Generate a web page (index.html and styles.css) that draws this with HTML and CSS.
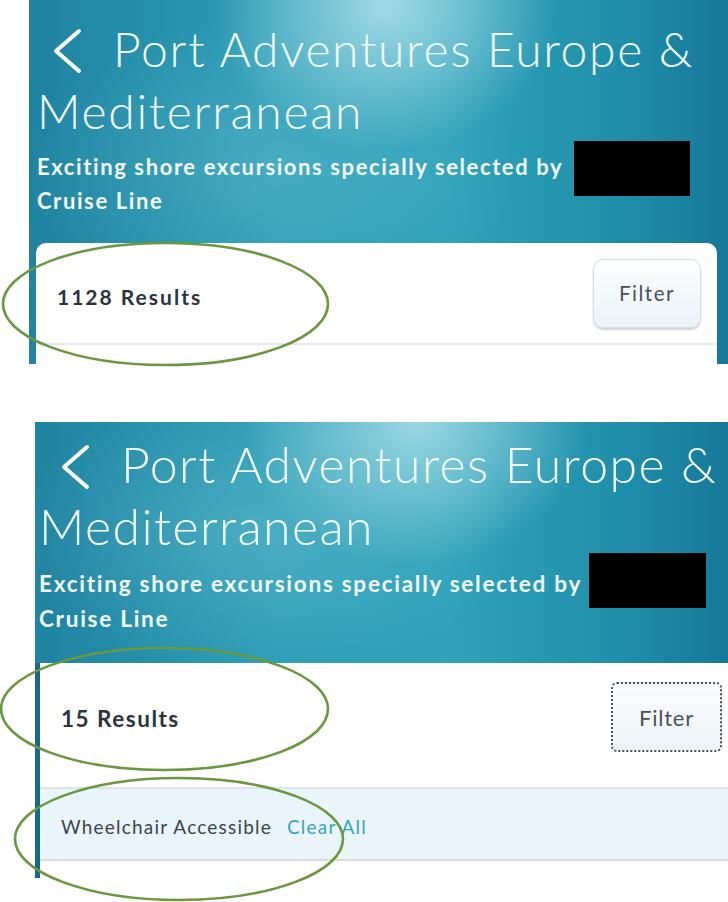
FILE: index.html
```html
<!DOCTYPE html>
<html lang="en">
<head>
<meta charset="utf-8">
<title>Port Adventures</title>
<link rel="stylesheet" href="styles.css">
</head>
<body>
<div class="page">
  <section class="shot shot-a">
    <header class="hero">
      <h1 class="title"><svg class="back" viewBox="0 0 30 46" width="30" height="46"><path d="M27 3 L4 23 L27 43"/></svg>Port Adventures Europe &amp; Mediterranean</h1>
      <p class="sub">Exciting shore excursions specially selected by <span class="redact"></span> Cruise Line</p>
    </header>
    <div class="card">
      <div class="results-row">
        <span class="count">1128 Results</span>
        <button class="filter">Filter</button>
      </div>
      <div class="card-foot"></div>
    </div>
  </section>

  <section class="shot shot-b">
    <header class="hero">
      <h1 class="title"><svg class="back" viewBox="0 0 30 46" width="30" height="46"><path d="M27 3 L4 23 L27 43"/></svg>Port Adventures Europe &amp; Mediterranean</h1>
      <p class="sub">Exciting shore excursions specially selected by <span class="redact"></span> Cruise Line</p>
    </header>
    <div class="content">
      <div class="results-row">
        <span class="count">15 Results</span>
        <button class="filter focused">Filter</button>
      </div>
      <div class="chips">
        <span class="chip">Wheelchair Accessible</span>
        <a class="clear" href="#">Clear All</a>
      </div>
      <div class="content-foot"></div>
    </div>
  </section>

  <svg class="marks" viewBox="0 0 728 902" width="728" height="902">
    <ellipse cx="165.5" cy="304" rx="162.5" ry="61"/>
    <ellipse cx="164.5" cy="709" rx="163.5" ry="61"/>
    <ellipse cx="179" cy="839" rx="164" ry="61"/>
  </svg>
</div>
</body>
</html>
```

FILE: styles.css
```css
* { box-sizing: border-box; }

html, body {
  margin: 0;
  padding: 0;
  background: #ffffff;
}

body {
  width: 728px;
  height: 902px;
  overflow: hidden;
  font-family: "Lato", "Liberation Sans", sans-serif;
}

.page {
  position: relative;
  width: 728px;
  height: 902px;
  display: flex;
  flex-direction: column;
}

.shot {
  display: flex;
  flex-direction: column;
}

.shot-a {
  margin-left: 29px;
  width: 699px;
  height: 364px;
  background:
    radial-gradient(ellipse 230px 190px at 51% 2%, rgba(200, 238, 243, 0.75), rgba(200, 238, 243, 0) 75%),
    radial-gradient(ellipse 330px 200px at 35% 45%, rgba(120, 200, 215, 0.35), rgba(120, 200, 215, 0) 75%),
    linear-gradient(90deg, #1f83a1 0%, #2c9db6 35%, #2fa2ba 60%, #1f8eaa 85%, #16789a 100%);
}

.shot-b {
  margin-left: 35px;
  margin-top: 58px;
  width: 693px;
  height: 456px;
}

.hero {
  padding: 18px 10px 0 8px;
  color: #ffffff;
}

.shot-b .hero {
  height: 241px;
  padding: 11px 0 0 4px;
  background:
    radial-gradient(ellipse 230px 190px at 55% 0%, rgba(200, 238, 243, 0.7), rgba(200, 238, 243, 0) 75%),
    radial-gradient(ellipse 330px 200px at 33% 45%, rgba(120, 200, 215, 0.4), rgba(120, 200, 215, 0) 75%),
    linear-gradient(90deg, #1f83a1 0%, #2c9db6 35%, #2fa2ba 60%, #1f8eaa 85%, #16789a 100%);
}

.title {
  margin: 0;
  font-weight: 300;
  font-size: 48px;
  line-height: 62px;
  letter-spacing: 1.7px;
  color: #f4fbfc;
}

.back {
  display: inline-block;
  vertical-align: -7px;
  margin-left: 15px;
  margin-right: 31px;
  fill: none;
  stroke: #ffffff;
  stroke-width: 4;
  stroke-linecap: round;
  stroke-linejoin: round;
}

.sub {
  margin: 8px 0 0 0;
  font-weight: 700;
  font-size: 22px;
  line-height: 34px;
  letter-spacing: 1.6px;
  color: #f2fafb;
}

.redact {
  display: inline-block;
  width: 116px;
  height: 55px;
  background: #000000;
  vertical-align: baseline;
  margin: -30px 0 -21px 4px;
}

.shot-b .title {
  font-size: 50px;
  line-height: 62px;
  letter-spacing: 1.4px;
}

.shot-b .back {
  margin-left: 21px;
  margin-right: 31px;
}

.shot-b .sub {
  margin-top: 9px;
  padding-right: 10px;
  font-size: 22.6px;
  line-height: 35px;
  letter-spacing: 1.7px;
}

.shot-b .redact {
  width: 117px;
  margin: -35px 0 -16px 0;
}

/* Top card */
.card {
  margin: 25px 11px 0 7px;
  flex: 1;
  background: #ffffff;
  border-radius: 10px 10px 0 0;
  display: flex;
  flex-direction: column;
}

.results-row {
  display: flex;
  align-items: center;
  justify-content: space-between;
}

.card .results-row {
  height: 102px;
  padding: 0 16px 0 21px;
  border-bottom: 2px solid #e8eaec;
}

.count {
  font-weight: 700;
  font-size: 21px;
  line-height: 24px;
  letter-spacing: 2px;
  color: #2a3440;
  margin-top: 8px;
}

.filter {
  width: 108px;
  height: 69px;
  border: 1px solid #d4dde3;
  border-radius: 10px;
  background: linear-gradient(#fdfeff, #eaf3f8);
  box-shadow: 0 2px 2px rgba(0, 0, 0, 0.18);
  font-family: "Lato", "Liberation Sans", sans-serif;
  font-size: 20.5px;
  letter-spacing: 1.5px;
  color: #4a525a;
  padding: 0;
}

.card-foot {
  flex: 1;
}

/* Bottom content */
.content {
  display: flex;
  flex-direction: column;
  background: #ffffff;
  border-left: 5px solid #17698a;
  height: 215px;
  flex: none;
}

.content .results-row {
  height: 124px;
  align-items: flex-start;
  padding: 19px 6px 0 21px;
}

.content .count {
  font-size: 22.5px;
  line-height: 26px;
  letter-spacing: 1.5px;
  margin-top: 24px;
}

.filter.focused {
  width: 111px;
  height: 70px;
  border: 2px dotted #4a5058;
  border-radius: 6px;
  box-shadow: none;
  background: linear-gradient(#fbfdfe, #edf4f8);
  font-size: 22px;
  letter-spacing: 0.8px;
}

.chips {
  height: 74px;
  display: flex;
  align-items: center;
  gap: 15px;
  padding: 0 0 0 21px;
  background: #eaf5fb;
  border-top: 2px solid #dfe3e6;
  border-bottom: 2px solid #d9dde0;
}

.chip {
  font-size: 19px;
  letter-spacing: 1.2px;
  color: #3a4450;
  margin-top: 4px;
}

.clear {
  font-size: 19px;
  letter-spacing: 1.2px;
  color: #3aa2c2;
  text-decoration: none;
  margin-top: 4px;
}

.content-foot {
  flex: 1;
}

/* Annotation ellipses */
.marks {
  position: absolute;
  left: 0;
  top: 0;
  pointer-events: none;
}

.marks ellipse {
  fill: none;
  stroke: #6a983f;
  stroke-width: 2.6;
}
```
